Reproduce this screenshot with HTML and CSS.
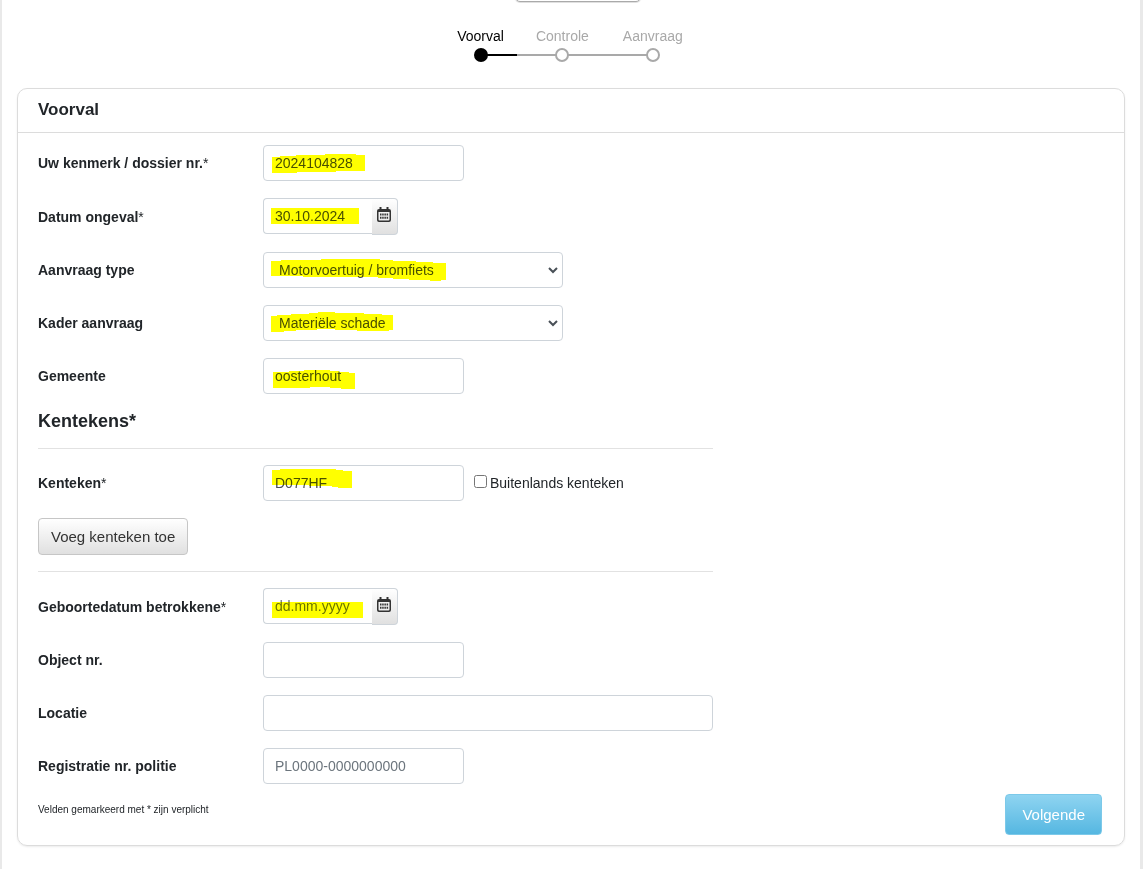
FILE: index.html
```
<!DOCTYPE html>
<html lang="nl">
<head>
    <meta charset="UTF-8">
    <meta name="viewport" content="width=device-width, initial-scale=1.0">
    <title>Voorval</title>
    <link rel="stylesheet" href="styles.css">
</head>
<body>
    <div class="page">
        <div class="top-bar">
            <button type="button" class="top-button"></button>
        </div>

        <ol class="steps">
            <li class="step active">Voorval</li>
            <li class="step">Controle</li>
            <li class="step">Aanvraag</li>
        </ol>

        <form class="card">
            <h1 class="card-title">Voorval</h1>
            <div class="card-body">
                <div class="row">
                    <label for="kenmerk">Uw kenmerk / dossier nr.<span class="star">*</span></label>
                    <div class="field">
                        <input type="text" id="kenmerk" class="control" value="2024104828">
                        <svg class="marker" width="200" height="36" viewBox="0 0 200 36"><path d="M9 12H17V11H33V10H62V9H93V10H102V26H73V27H34V28H9Z"/></svg>
                    </div>
                </div>
                <div class="row">
                    <label for="datum">Datum ongeval<span class="star">*</span></label>
                    <div class="field">
                        <input type="text" id="datum" class="control date" value="30.10.2024">
                        <button type="button" class="calendar" aria-label="Kalender">
                            <svg width="14" height="16" viewBox="0 0 14 16"><path d="M2.500 0h2v2h5V0h2v2h.5q2 0 2 2v9q0 2-2 2H2q-2 0-2-2V4q0-2 2-2h.5zM1.500 5v7.500q0 1 1 1h9q1 0 1-1V5z" fill-rule="evenodd"/><path d="M3 6.500h1.500v2H3zM5.200 6.500h1.500v2H5.200zM7.400 6.500h1.500v2H7.400zM9.600 6.500h1.500v2H9.600zM3 9.700h1.500v2H3zM5.200 9.700h1.500v2H5.200zM7.400 9.700h1.500v2H7.400zM9.600 9.700h1.500v2H9.600z"/></svg>
                        </button>
                        <svg class="marker" width="108" height="36" viewBox="0 0 108 36"><path d="M8 10H96V26H8Z"/></svg>
                    </div>
                </div>
                <div class="row">
                    <label for="type">Aanvraag type</label>
                    <div class="field">
                        <select id="type" class="control select"><option>Motorvoertuig / bromfiets</option></select>
                        <svg class="marker" width="300" height="36" viewBox="0 0 300 36"><path d="M8 9H18V8H58V7H117V8H130V9H153V10H170V11H183V28H178V29H167V28H146V27H130V26H115V25H40V24H8Z"/></svg>
                    </div>
                </div>
                <div class="row">
                    <label for="kader">Kader aanvraag</label>
                    <div class="field">
                        <select id="kader" class="control select"><option>Materiële schade</option></select>
                        <svg class="marker" width="300" height="36" viewBox="0 0 300 36"><path d="M8 11H14V10H28V9H46V8H55V7H72V8H101V9H119V10H130V25H126V26H94V25H72V24H54V25H33V26H21V27H8Z"/></svg>
                    </div>
                </div>
                <div class="row">
                    <label for="gemeente">Gemeente</label>
                    <div class="field">
                        <input type="text" id="gemeente" class="control" value="oosterhout">
                        <svg class="marker" width="200" height="36" viewBox="0 0 200 36"><path d="M10 14H26V13H41V12H67V13H76V14H86V15H92V31H78V30H67V29H47V30H10Z"/></svg>
                    </div>
                </div>

                <fieldset class="plates">
                    <legend>Kentekens<span class="star">*</span></legend>
                    <div class="row">
                        <label for="kenteken">Kenteken<span class="star">*</span></label>
                        <div class="field">
                            <input type="text" id="kenteken" class="control" value="D077HF">
                            <svg class="marker" width="200" height="36" viewBox="0 0 200 36"><path d="M9 5H17V4H73V5H80V6H89V23H75V22H69V21H46V20H9Z"/></svg>
                        </div>
                        <div class="check">
                            <input type="checkbox" id="buitenlands">
                            <label for="buitenlands">Buitenlands kenteken</label>
                        </div>
                    </div>
                    <button type="button" class="button">Voeg kenteken toe</button>
                </fieldset>

                <div class="row">
                    <label for="geboorte">Geboortedatum betrokkene<span class="star">*</span></label>
                    <div class="field">
                        <input type="text" id="geboorte" class="control date" placeholder="dd.mm.yyyy">
                        <button type="button" class="calendar" aria-label="Kalender">
                            <svg width="14" height="16" viewBox="0 0 14 16"><path d="M2.500 0h2v2h5V0h2v2h.5q2 0 2 2v9q0 2-2 2H2q-2 0-2-2V4q0-2 2-2h.5zM1.500 5v7.500q0 1 1 1h9q1 0 1-1V5z" fill-rule="evenodd"/><path d="M3 6.500h1.500v2H3zM5.200 6.500h1.500v2H5.200zM7.400 6.500h1.500v2H7.400zM9.600 6.500h1.500v2H9.600zM3 9.700h1.500v2H3zM5.200 9.700h1.500v2H5.200zM7.400 9.700h1.500v2H7.400zM9.600 9.700h1.500v2H9.600z"/></svg>
                        </button>
                        <svg class="marker" width="108" height="36" viewBox="0 0 108 36"><path d="M9 14H100V30H9Z"/></svg>
                    </div>
                </div>
                <div class="row">
                    <label for="object">Object nr.</label>
                    <div class="field"><input type="text" id="object" class="control"></div>
                </div>
                <div class="row">
                    <label for="locatie">Locatie</label>
                    <div class="field"><input type="text" id="locatie" class="control wide"></div>
                </div>
                <div class="row">
                    <label for="registratie">Registratie nr. politie</label>
                    <div class="field"><input type="text" id="registratie" class="control" placeholder="PL0000-0000000000"></div>
                </div>
            </div>
            <div class="card-footer">
                <p class="note">Velden gemarkeerd met * zijn verplicht</p>
                <button type="submit" class="button primary">Volgende</button>
            </div>
        </form>
    </div>
</body>
</html>
```
FILE: styles.css
```
*, *::before, *::after {
    box-sizing: border-box;
}
body {
    margin: 0;
    font-family: "Liberation Sans", Arial, sans-serif;
    font-size: 14px;
    color: #212529;
    background-color: #fff;
}
.page {
    min-height: 100vh;
    padding: 0 15px 22px;
    border: solid #e9e9e9;
    border-width: 0 3px 0 2px;
}
.top-bar {
    display: flex;
    justify-content: center;
    align-items: flex-end;
    height: 3px;
    padding-left: 14px;
    overflow: hidden;
}
.top-button {
    flex: none;
    width: 126px;
    height: 36px;
    margin-bottom: 1px;
    border: 1px solid #aaa;
    border-radius: 5px;
    background: #fff;
    box-shadow: 0 1px 1px #ddd;
}

/* progress steps */
.steps {
    display: flex;
    justify-content: center;
    margin: 0;
    padding: 25px 0 26px;
    list-style: none;
    line-height: 16px;
}
.step {
    position: relative;
    padding: 0 19px 18px;
    color: #a9a9a9;
}
.step:first-child {
    padding-left: 13px;
    padding-right: 13px;
}
.step:last-child {
    padding-left: 15px;
    padding-right: 15px;
}
.step::before {
    content: "";
    position: absolute;
    left: 0;
    right: 0;
    bottom: 6px;
    height: 2px;
    background: #a9a9a9;
}
.step:first-child::before {
    left: 50%;
}
.step:last-child::before {
    right: 50%;
}
.step::after {
    content: "";
    position: absolute;
    left: calc(50% - 7px);
    bottom: 0;
    width: 14px;
    height: 14px;
    border: 2px solid #a9a9a9;
    border-radius: 50%;
    background: #fff;
}
.step.active {
    color: #000;
}
.step.active::before {
    background: #000;
}
.step.active::after {
    border-color: #000;
    background: #000;
}

/* form card */
.card {
    border: 1px solid #dcdcdc;
    border-radius: 10px;
    box-shadow: 0 1px 2px rgba(0,0,0,0.08);
}
.card-title {
    margin: 0;
    padding: 11px 20px 12px;
    border-bottom: 1px solid #dcdcdc;
    font-size: 17px;
    line-height: 20px;
}
.card-body {
    display: flex;
    flex-direction: column;
    gap: 17px;
    max-width: 715px;
    padding: 12px 20px 0;
}
.row {
    display: flex;
    align-items: center;
}
.row > label {
    flex: none;
    width: 225px;
    font-weight: bold;
}
.row .star {
    font-weight: normal;
}
.field {
    position: relative;
    display: flex;
}
.control {
    width: 201px;
    height: 36px;
    padding: 0 11px;
    border: 1px solid #ced4da;
    border-radius: 4px;
    background-color: #fff;
    color: #495057;
    font-family: inherit;
    font-size: 14px;
}
.control::placeholder {
    color: #6c757d;
}
.control.date {
    width: 109px;
    border-right: 0;
    border-radius: 4px 0 0 4px;
}
.control.select {
    width: 300px;
    padding-left: 15px;
    appearance: none;
    background-image: url("data:image/svg+xml,%3Csvg xmlns='http://www.w3.org/2000/svg' width='10' height='7'%3E%3Cpath d='M1 1l4 4 4-4' fill='none' stroke='%23495057' stroke-width='2'/%3E%3C/svg%3E");
    background-repeat: no-repeat;
    background-position: right 4px center;
}
.control.wide {
    width: 450px;
}
.calendar {
    width: 26px;
    height: 37px;
    padding: 0 2px 0 0;
    border: 1px solid #ced4da;
    border-left: 0;
    border-radius: 0 4px 4px 0;
    background: linear-gradient(#fff, #e0e0e0);
    fill: #333;
}
.marker {
    position: absolute;
    left: 0;
    top: 0;
    fill: #ff0;
    mix-blend-mode: multiply;
    pointer-events: none;
}
.plates {
    min-width: 0;
    margin: 0 0 -1px;
    padding: 0 0 16px;
    border: 0;
    border-bottom: 1px solid #e2e2e2;
}
.plates legend {
    width: 100%;
    padding: 0 0 17px;
    border-bottom: 1px solid #e2e2e2;
    font-size: 18px;
    font-weight: bold;
    line-height: 20px;
}
.plates .row {
    margin: 16px 0 17px;
}
.check {
    display: flex;
    align-items: center;
    gap: 3px;
    margin-left: 10px;
}
.check input {
    width: 13px;
    height: 13px;
    margin: 0 0 3px;
}
.button {
    height: 37px;
    padding: 0 12px;
    border: 1px solid #c6c6c6;
    border-radius: 4px;
    background: linear-gradient(#fff, #e0e0e0);
    color: #333;
    font-family: inherit;
    font-size: 15px;
}
.button.primary {
    height: 41px;
    padding: 0 16px;
    border-color: #7cc9e9;
    background: linear-gradient(#8fd4f1, #55b7e1);
    color: #fff;
}
.card-footer {
    display: flex;
    justify-content: space-between;
    align-items: flex-start;
    padding: 10px 22px 10px 20px;
}
.note {
    margin: 10px 0 0;
    font-size: 10px;
    line-height: 12px;
}
```
